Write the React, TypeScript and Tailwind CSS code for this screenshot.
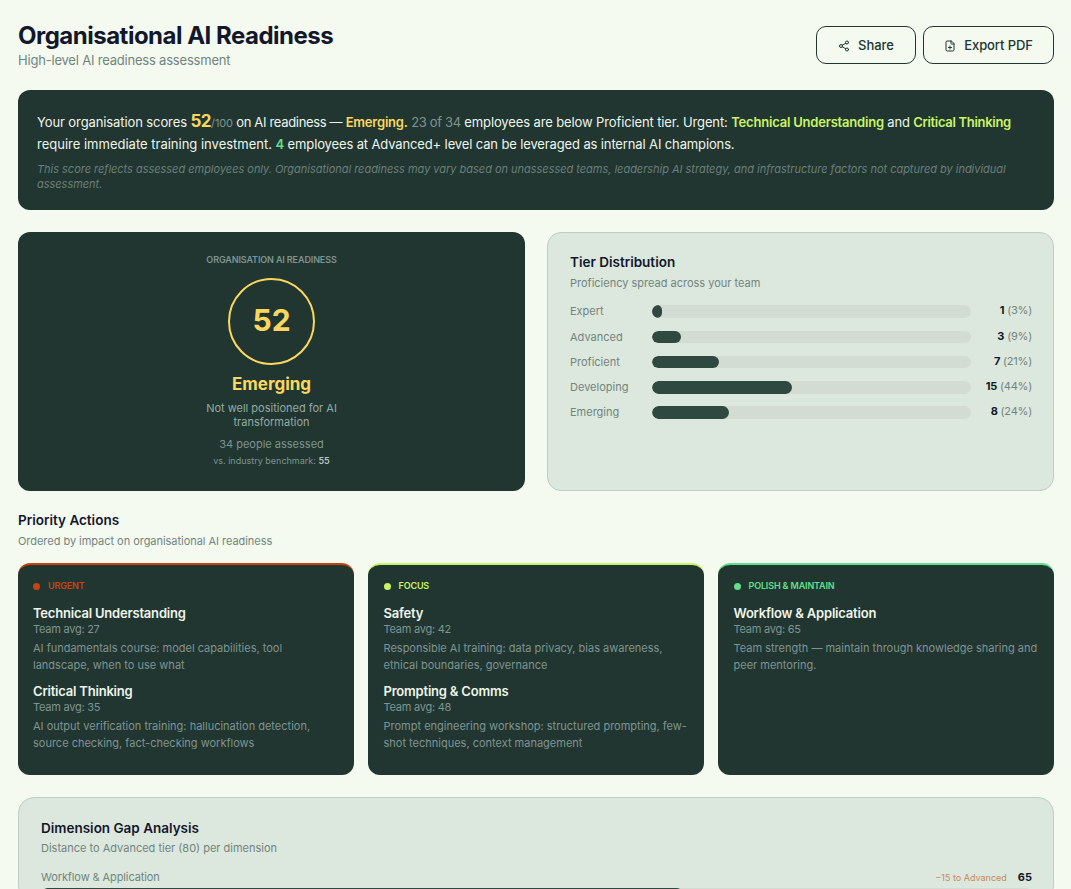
import { Share2, FilePlus } from "lucide-react";

const tiers = [
  { name: "Expert", n: "1", p: "(3%)", w: "w-[3%]" },
  { name: "Advanced", n: "3", p: "(9%)", w: "w-[9%]" },
  { name: "Proficient", n: "7", p: "(21%)", w: "w-[21%]" },
  { name: "Developing", n: "15", p: "(44%)", w: "w-[44%]" },
  { name: "Emerging", n: "8", p: "(24%)", w: "w-[24%]" },
];

const actions = [
  {
    label: "URGENT",
    border: "border-t-[#c8440f]",
    dot: "bg-[#c8440f]",
    text: "text-[#c8440f]",
    pad: "pl-[15px]",
    items: [
      { t: "Technical Understanding", a: "Team avg: 27", d: "AI fundamentals course: model capabilities, tool landscape, when to use what" },
      { t: "Critical Thinking", a: "Team avg: 35", d: "AI output verification training: hallucination detection, source checking, fact-checking workflows" },
    ],
  },
  {
    label: "FOCUS",
    border: "border-t-[#c8f565]",
    dot: "bg-[#c8f565]",
    text: "text-[#c8f565]",
    pad: "pl-[15.5px]",
    items: [
      { t: "Safety", a: "Team avg: 42", d: "Responsible AI training: data privacy, bias awareness, ethical boundaries, governance" },
      { t: "Prompting & Comms", a: "Team avg: 48", d: "Prompt engineering workshop: structured prompting, few-shot techniques, context management" },
    ],
  },
  {
    label: "POLISH & MAINTAIN",
    border: "border-t-[#5fe08a]",
    dot: "bg-[#5fe08a]",
    text: "text-[#5fe08a]",
    pad: "pl-[15.5px]",
    items: [
      { t: "Workflow & Application", a: "Team avg: 65", d: "Team strength — maintain through knowledge sharing and peer mentoring." },
    ],
  },
];

export default function App() {
  return (
    <div className="h-[889px] overflow-hidden bg-[#f4faf0] pl-[18px] pr-[17px] pt-[21px] font-['Inter',sans-serif] text-[#12172b]">
      <header className="flex items-start justify-between">
        <div>
          <h1 className="text-[24px] font-bold leading-[30px] tracking-[-0.5px]">Organisational AI Readiness</h1>
          <p className="text-[13px] leading-[18px] tracking-[-0.2px] text-[#71857f]">High-level AI readiness assessment</p>
        </div>
        <div className="mt-[5px] flex gap-[7px]">
          <button className="flex h-[38px] w-[100px] items-center justify-center gap-[8px] rounded-[10px] border border-[#213631] pt-[1px] text-[13px] font-medium text-[#213631]">
            <Share2 size={12} />
            Share
          </button>
          <button className="flex h-[38px] w-[131px] items-center justify-center gap-[8px] rounded-[10px] border border-[#213631] pt-[1px] text-[13px] font-medium tracking-[-0.1px] text-[#213631]">
            <FilePlus size={12} />
            Export PDF
          </button>
        </div>
      </header>

      <section className="mt-[21px] h-[120px] rounded-[12px] bg-[#213631] px-[19px] pt-[21px] text-[13px] leading-[21px] tracking-[-0.13px] text-[#eef5ea]">
        <p>
          <span className="tracking-[-0.1px]">Your organisation scores </span>
          <span className="text-[17px] font-bold tracking-[-0.5px] text-[#fbd85d]">52</span>
          <span className="text-[11px] text-[#7f9490]">/100</span>
          <span className="tracking-[-0.33px]"> on AI readiness — </span>
          <span className="font-semibold tracking-[-0.2px] text-[#fbd85d]">Emerging.</span>{" "}
          <span className="tracking-[-0.35px] text-[#7f9490]">23 of 34</span>
          <span className="tracking-[-0.12px]"> employees are below Proficient tier. Urgent: </span>
          <span className="font-semibold tracking-[-0.2px] text-[#c8f565]">Technical Understanding</span>
          <span className="tracking-[-0.2px]"> and </span>
          <span className="font-semibold tracking-[-0.3px] text-[#c8f565]">Critical Thinking</span>{" "}
          <span className="tracking-[0px]">require immediate training investment.</span>{" "}
          <span className="font-semibold text-[#5fe08a]">4</span> employees at Advanced+ level can be leveraged as internal AI champions.
        </p>
        <p className="mt-[7px] text-[11px] italic leading-[15px] tracking-[-0.02px] text-[#6b7f7a]">
          This score reflects assessed employees only. Organisational readiness may vary based on unassessed teams, leadership AI strategy, and infrastructure factors not captured by individual assessment.
        </p>
      </section>

      <div className="mt-[22px] grid h-[259px] grid-cols-2 gap-[22px]">
        <section className="flex flex-col items-center rounded-[12px] bg-[#213631] pt-[22px] text-center">
          <div className="text-[9px] font-semibold uppercase leading-[12px] tracking-[-0.12px] text-[#7f9490]">Organisation AI Readiness</div>
          <div className="mt-[12px] flex h-[87px] w-[87px] items-center justify-center rounded-full border-2 border-[#fbd85d] pb-[2px] text-[30px] font-bold text-[#fbd85d]">52</div>
          <div className="mt-[7px] text-[17px] font-bold leading-[24px] text-[#fbd85d]">Emerging</div>
          <p className="mt-[5px] w-[160px] text-[11px] leading-[14px] text-[#95a9a4]">Not well positioned for AI transformation</p>
          <p className="mt-[7px] text-[11px] leading-[16px] text-[#7f9490]">34 people assessed</p>
          <p className="mt-[2px] text-[9px] leading-[14px] text-[#7f9490]">
            vs. industry benchmark: <span className="font-semibold text-[#b4c5c0]">55</span>
          </p>
        </section>

        <section className="rounded-[14px] border border-[#bfcdc2] bg-[#dce7dd] pl-[22px] pr-[21px] pt-[20px]">
          <h2 className="text-[13.5px] font-semibold leading-[18px]">Tier Distribution</h2>
          <p className="mt-[4px] text-[11px] leading-[16px] text-[#71857f]">Proficiency spread across your team</p>
          <div className="mt-[14.4px] flex flex-col gap-[12.75px]">
            {tiers.map((t) => (
              <div key={t.name} className="flex h-[12.5px] items-center">
                <div className="w-[82px] text-[11px] text-[#71857f]">{t.name}</div>
                <div className="h-full w-[319px] overflow-hidden rounded-full bg-[#d2dcd3]">
                  <div className={`${t.w} h-full rounded-full bg-[#2f4840]`} />
                </div>
                <div className="flex-1 -translate-y-[1px] text-right text-[11px] tracking-[-0.2px] text-[#71857f]">
                  <span className="font-bold text-[#12172b]">{t.n}</span> {t.p}
                </div>
              </div>
            ))}
          </div>
        </section>
      </div>

      <h2 className="mt-[20px] text-[13.5px] font-semibold leading-[18px]">Priority Actions</h2>
      <p className="mt-[4px] text-[11px] leading-[16px] tracking-[-0.04px] text-[#71857f]">Ordered by impact on organisational AI readiness</p>

      <div className="mt-[14px] grid h-[212px] grid-cols-3 gap-[14px]">
        {actions.map((a) => (
          <section key={a.label} className={`rounded-[12px] border-t-2 bg-[#213631] pr-[15.5px] pt-[15px] ${a.pad} ${a.border}`}>
            <div className="flex items-center gap-[8px]">
              <span className={`h-[7px] w-[7px] rounded-full ${a.dot}`} />
              <span className={`text-[9px] font-semibold leading-[12px] tracking-[-0.15px] ${a.text}`}>{a.label}</span>
            </div>
            <div className="mt-[12px] flex flex-col gap-[8px]">
              {a.items.map((i) => (
                <div key={i.t}>
                  <h3 className="text-[13px] font-semibold leading-[18px] tracking-[-0.2px] text-[#eef5ea]">{i.t}</h3>
                  <div className="text-[11px] leading-[15px] tracking-[-0.25px] text-[#7f9490]">{i.a}</div>
                  <p className="mt-[3px] text-[11px] leading-[17px] text-[#7f9490]">{i.d}</p>
                </div>
              ))}
            </div>
          </section>
        ))}
      </div>

      <section className="mt-[22px] rounded-[16px] border border-[#bfcdc2] bg-[#dce7dd] pl-[22px] pr-[21px] pt-[21px]">
        <h2 className="text-[13.5px] font-semibold leading-[18px]">Dimension Gap Analysis</h2>
        <p className="mt-[3px] text-[11px] leading-[16px] text-[#71857f]">Distance to Advanced tier (80) per dimension</p>
        <div className="mt-[13px] flex items-center justify-between">
          <span className="text-[11px] tracking-[-0.1px] text-[#71857f]">Workflow & Application</span>
          <span className="flex items-center gap-[11px]">
            <span className="text-[9px] text-[#c98a5a]">−15 to Advanced</span>
            <span className="text-[11px] font-bold">65</span>
          </span>
        </div>
        <div className="mt-[2px] h-[13px] w-full overflow-hidden rounded-full bg-[#d2dcd3]">
          <div className="h-full w-[64.8%] rounded-full bg-[#2f4840]" />
        </div>
      </section>
    </div>
  );
}
